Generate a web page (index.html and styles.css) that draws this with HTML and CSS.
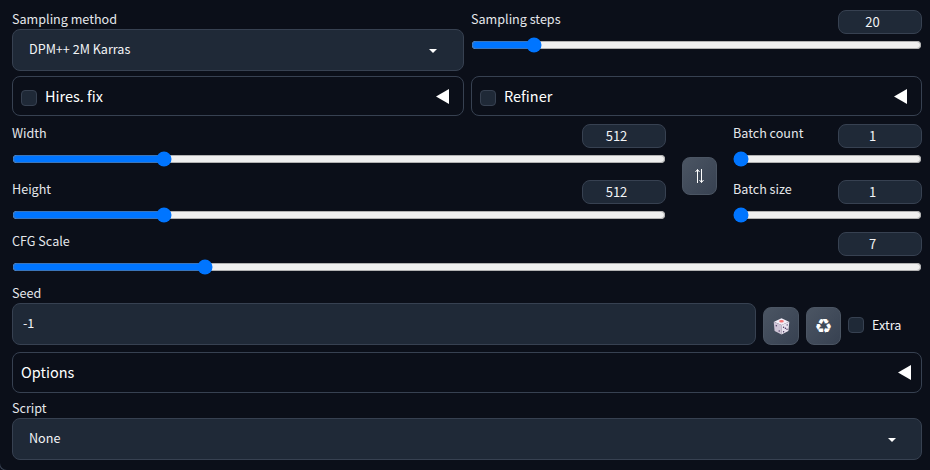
FILE: index.html
```html
<!DOCTYPE html>
<html lang="en">
<head>
<meta charset="utf-8">
<title>Generation settings</title>
<link rel="stylesheet" href="styles.css">
</head>
<body>
<main class="panel">
  <div class="row sampling">
    <div class="field">
      <div class="label">Sampling method</div>
      <div class="box select"><span>DPM++ 2M Karras</span><svg class="caret" viewBox="0 0 8 4"><path d="M0 0h8L4 4z"/></svg></div>
    </div>
    <div class="slider">
      <div class="head"><label class="label" for="steps">Sampling steps</label><input class="number" value="20"></div>
      <input class="range" id="steps" type="range" min="1" max="150" value="20">
    </div>
  </div>
  <div class="row accordions">
    <div class="accordion"><i class="check"></i><span>Hires. fix</span><svg class="arrow" viewBox="0 0 13 15"><path d="M13 0v15L0 7.500z"/></svg></div>
    <div class="accordion"><i class="check"></i><span>Refiner</span><svg class="arrow" viewBox="0 0 13 15"><path d="M13 0v15L0 7.500z"/></svg></div>
  </div>
  <div class="dimensions">
    <div class="stack">
      <div class="slider">
        <div class="head"><label class="label" for="width">Width</label><input class="number" value="512"></div>
        <input class="range" id="width" type="range" min="64" max="2048" step="8" value="512">
      </div>
      <div class="slider">
        <div class="head"><label class="label" for="height">Height</label><input class="number" value="512"></div>
        <input class="range" id="height" type="range" min="64" max="2048" step="8" value="512">
      </div>
    </div>
    <button class="tool swap" aria-label="Swap width and height"><svg width="11" height="16" viewBox="0 0 11 16"><path d="M3.500 15V1.500M1.500 4l2-2.500 2 2.500M7.500 1v13.500M5.500 12l2 2.500 2-2.500"/></svg></button>
    <div class="stack">
      <div class="slider">
        <div class="head"><label class="label" for="count">Batch count</label><input class="number" value="1"></div>
        <input class="range" id="count" type="range" min="1" max="100" value="1">
      </div>
      <div class="slider">
        <div class="head"><label class="label" for="size">Batch size</label><input class="number" value="1"></div>
        <input class="range" id="size" type="range" min="1" max="8" value="1">
      </div>
    </div>
  </div>
  <div class="slider cfg">
    <div class="head"><label class="label" for="cfg">CFG Scale</label><input class="number" value="7"></div>
    <input class="range" id="cfg" type="range" min="1" max="30" step="0.5" value="7">
  </div>
  <div class="seed-row">
    <div class="field seed">
      <div class="label">Seed</div>
      <div class="box">-1</div>
    </div>
    <button class="tool dice" aria-label="Random seed"><svg width="17" height="17" viewBox="0 0 17 17">
      <path fill="#f3edf7" d="M8.500 .3l7.500 3.400-7.500 3.400L1 3.700z"/>
      <path fill="#cfc4d6" d="M.7 3.700l7.800 3.400v9.500L1.600 13z"/>
      <path fill="#e9e2ee" d="M16.300 3.700L8.500 7.100v9.500l6.900-3.600z"/>
      <ellipse cx="8.500" cy="3.300" rx="2.300" ry="1.200" fill="#f37272"/>
      <g fill="#46345d"><circle cx="3.300" cy="7.700" r=".7"/><circle cx="6.200" cy="13" r=".7"/><circle cx="14.200" cy="6.900" r=".7"/><circle cx="10.600" cy="9.300" r=".7"/><circle cx="12.400" cy="10.200" r=".7"/><circle cx="14" cy="11.300" r=".7"/><circle cx="10.600" cy="13.700" r=".7"/></g>
    </svg></button>
    <button class="tool recycle" aria-label="Reuse seed">&#9851;&#65038;</button>
    <div class="extra"><i class="check"></i><span>Extra</span></div>
  </div>
  <div class="accordion options"><span>Options</span><svg class="arrow" viewBox="0 0 13 15"><path d="M13 0v15L0 7.500z"/></svg></div>
  <div class="field script">
    <div class="label">Script</div>
    <div class="box select"><span>None</span><svg class="caret" viewBox="0 0 8 4"><path d="M0 0h8L4 4z"/></svg></div>
  </div>
</main>
</body>
</html>
```
FILE: styles.css
```css
* {
  box-sizing: border-box;
}

body {
  margin: 0;
  background: #0b0f19;
  color: #f3f4f6;
  font: 12.600px/20px "Noto Sans CJK SC", "Noto Sans", sans-serif;
  overflow: hidden;
}

.panel {
  height: 471px;
  margin-left: -1px;
  padding: 9px 8px 0 12px;
  border: 1px solid #374151;
  border-top: 0;
  border-right: 0;
  border-radius: 0 0 0 8px;
  overflow: hidden;
}

.row {
  display: grid;
  grid-template-columns: 452px 451px;
  gap: 7px;
}

.sampling {
  height: 67px;
}

.label {
  display: block;
  height: 20px;
  color: #e5e7eb;
  white-space: nowrap;
}

.box {
  display: flex;
  align-items: center;
  height: 42px;
  padding: 0 10px 2px;
  background: #1f2937;
  border: 1px solid #374151;
  border-radius: 8px;
}

.select {
  justify-content: space-between;
  padding: 0 26px 2px 16px;
}

.script .select {
  padding-right: 25px;
}

.caret {
  width: 8px;
  height: 4px;
  margin-top: 3px;
  fill: #fff;
}

.slider {
  display: flex;
  flex-direction: column;
  gap: 3px;
}

.head {
  display: flex;
  justify-content: space-between;
  height: 25px;
}

.number {
  width: 84px;
  height: 24px;
  margin-top: 1px;
  padding: 0 25px 1px 10px;
  background: #1f2937;
  border: 1px solid #374151;
  border-radius: 8px;
  color: #f3f4f6;
  font: inherit;
  font-size: 13px;
  text-align: center;
}

.range {
  display: block;
  width: 100%;
  height: 16px;
  margin: 0;
}

.accordion {
  display: flex;
  align-items: center;
  height: 40px;
  padding: 0 14px 0 8px;
  border: 1px solid #374151;
  border-radius: 8px;
  color: #fff;
  font-size: 14.500px;
}

.check {
  width: 16px;
  height: 16px;
  margin: 3px 8px 0 0;
  background: #1f2937;
  border: 1px solid #374151;
  border-radius: 4px;
}

.arrow {
  width: 13px;
  height: 15px;
  margin-left: auto;
  fill: #fff;
}

.dimensions {
  display: grid;
  grid-template-columns: 654px 35px 189px;
  gap: 16px;
  margin-top: 7px;
}

.stack {
  display: flex;
  flex-direction: column;
  gap: 12px;
}

.tool {
  display: flex;
  align-items: center;
  justify-content: center;
  width: 35px;
  height: 38px;
  padding: 0;
  background: linear-gradient(to bottom right, #4b5563, #374151);
  border: 1px solid #4b5563;
  border-radius: 8px;
}

.dice {
  width: 36px;
}

.recycle {
  color: #fff;
  font: 20px/20px "DejaVu Sans", sans-serif;
}

.swap {
  margin-top: 34px;
}

.swap path {
  fill: none;
  stroke: #fff;
  stroke-width: 1;
}

.cfg {
  margin-top: 8px;
}

.seed-row {
  display: flex;
  align-items: flex-end;
  gap: 7px;
  height: 62px;
  margin-top: 8px;
}

.seed {
  width: 744px;
  height: 62px;
}

.extra {
  display: flex;
  align-items: center;
  height: 38px;
  padding-bottom: 2px;
}

.extra .check {
  margin-top: 0;
}

.options {
  height: 41px;
  margin-top: 7px;
  padding-right: 10px;
  padding-bottom: 1px;
}

.script {
  margin-top: 5px;
}
```
